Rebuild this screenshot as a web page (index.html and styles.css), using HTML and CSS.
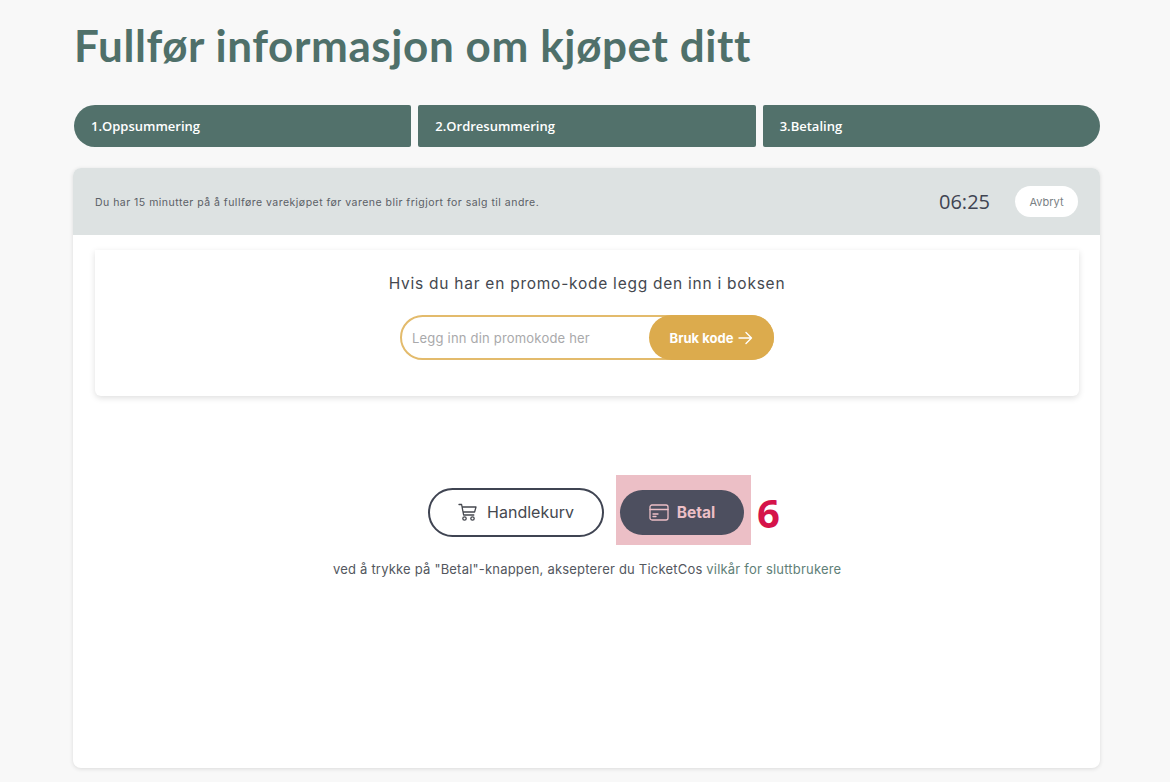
FILE: index.html
```html
<!DOCTYPE html>
<html lang="no">
<head>
  <meta charset="UTF-8" />
  <title>Fullfør informasjon om kjøpet ditt</title>
  <link rel="stylesheet" href="styles.css">
</head>
<body>
  <div class="page">
    <h1 class="title">Fullfør informasjon om kjøpet ditt</h1>

    <div class="steps">
      <div class="step">1.Oppsummering</div>
      <div class="step">2.Ordresummering</div>
      <div class="step">3.Betaling</div>
    </div>

    <div class="card">
      <div class="card-head">
        <p class="notice">Du har 15 minutter på å fullføre varekjøpet før varene blir frigjort for salg til andre.</p>
        <span class="timer">06:25</span>
        <button class="cancel">Avbryt</button>
      </div>

      <div class="promo">
        <p class="promo-label">Hvis du har en promo-kode legg den inn i boksen</p>
        <div class="promo-field">
          <span class="promo-hint">Legg inn din promokode her</span>
          <button class="promo-btn">Bruk kode
            <svg width="15" height="14" viewBox="0 0 15 14" fill="none" stroke="currentColor" stroke-width="1.4" stroke-linecap="round" stroke-linejoin="round"><path d="M1 7h12.5M8 1.5 13.500 7 8 12.500"/></svg>
          </button>
        </div>
      </div>

      <div class="actions">
        <button class="btn-cart">
          <svg width="20" height="19" viewBox="0 0 20 19" fill="none" stroke="currentColor" stroke-width="1.300" stroke-linecap="round" stroke-linejoin="round"><path d="M1 1.500h2.600l2 10.500h10.200M4 4h14l-1.400 5H5"/><circle cx="6.500" cy="15.500" r="1.700"/><circle cx="14.500" cy="15.500" r="1.700"/></svg>
          Handlekurv
        </button>
        <div class="mark">
          <button class="btn-pay">
            <svg width="20" height="17" viewBox="0 0 20 17" fill="none" stroke="currentColor" stroke-width="1.300" stroke-linecap="round" stroke-linejoin="round"><rect x="1" y="1" width="18" height="15" rx="2"/><path d="M1 5.500h18M4 10h5M4 12.500h3"/></svg>
            Betal
          </button>
        </div>
        <span class="mark-no">6</span>
      </div>

      <p class="terms">ved å trykke på "Betal"-knappen, aksepterer du TicketCos <a class="terms-link" href="#">vilkår for sluttbrukere</a></p>
    </div>
  </div>
</body>
</html>
```

FILE: styles.css
```css
* {
  margin: 0;
  padding: 0;
  box-sizing: border-box;
  font-family: "Inter", sans-serif;
}

body {
  background-color: #f8f8f8;
  height: 782px;
  overflow: hidden;
}

button {
  border: none;
  cursor: pointer;
}

.page {
  width: 1027px;
  margin-left: 73px;
}

.title {
  padding-top: 17px;
  padding-left: 1px;
  height: 105px;
  font-family: "Lato", sans-serif;
  font-size: 44px;
  line-height: 56px;
  font-weight: 700;
  letter-spacing: 0.6px;
  color: #4f706a;
}

.steps {
  display: flex;
  gap: 7px;
  height: 42px;
  margin-bottom: 21px;
  padding-left: 1px;
}

.step {
  flex: 1;
  display: flex;
  align-items: center;
  padding-left: 17px;
  background-color: #52716b;
  color: #fff;
  font-family: "Open Sans", sans-serif;
  font-size: 13px;
  font-weight: 600;
  border-radius: 2px;
}

.step:first-child {
  border-radius: 21px 2px 2px 21px;
}

.step:last-child {
  border-radius: 2px 21px 21px 2px;
}

.card {
  height: 600px;
  background-color: #fff;
  border-radius: 8px;
  box-shadow: 0 1px 4px rgba(0, 0, 0, 0.12);
}

.card-head {
  display: flex;
  align-items: center;
  height: 67px;
  padding: 0 22px;
  background-color: #dde2e2;
  border-radius: 8px 8px 0 0;
}

.notice {
  flex: 1;
  padding-top: 1px;
  font-size: 10.500px;
  letter-spacing: 0.48px;
  color: #5b6066;
}

.timer {
  margin-right: 25px;
  font-family: "Open Sans", sans-serif;
  font-size: 20px;
  color: #3f4452;
}

.cancel {
  width: 63px;
  height: 31px;
  border-radius: 16px;
  background-color: #fff;
  color: #7a8185;
  font-size: 11px;
}

.promo {
  height: 146px;
  margin: 15px 21px 0 22px;
  padding-top: 24px;
  background-color: #fff;
  border-radius: 0 0 6px 6px;
  box-shadow: 0 2px 6px rgba(0, 0, 0, 0.13);
  text-align: center;
}

.promo-label {
  font-size: 15.500px;
  line-height: 20px;
  letter-spacing: 0.75px;
  color: #44484f;
}

.promo-field {
  display: flex;
  align-items: center;
  justify-content: space-between;
  width: 374px;
  height: 45px;
  margin: 21px auto 0;
  padding-left: 10px;
  border: 2px solid #e3bb6c;
  border-radius: 23px;
}

.promo-hint {
  font-size: 13px;
  letter-spacing: 0.2px;
  color: #a9a9ab;
}

.promo-btn {
  display: flex;
  align-items: center;
  justify-content: center;
  gap: 5px;
  width: 125px;
  height: 45px;
  margin-right: -2px;
  border-radius: 23px;
  background-color: #dcab4d;
  color: #fff;
  font-size: 13px;
  font-weight: 700;
}

.actions {
  display: flex;
  align-items: center;
  height: 70px;
  margin-top: 79px;
  padding-left: 355px;
}

.btn-cart {
  display: flex;
  align-items: center;
  justify-content: center;
  gap: 9px;
  width: 176px;
  height: 49px;
  margin-top: 4px;
  margin-right: 12px;
  background-color: #fff;
  border: 2px solid #3f4452;
  border-radius: 25px;
  color: #45484f;
  font-size: 16px;
}

.mark {
  display: flex;
  align-items: center;
  width: 135px;
  height: 70px;
  padding-left: 4px;
  padding-top: 5px;
  background-color: #ecbfc6;
}

.btn-pay {
  display: flex;
  align-items: center;
  justify-content: center;
  gap: 8px;
  width: 124px;
  height: 45px;
  border-radius: 23px;
  background-color: #4d4f5f;
  color: #ecbfc6;
  font-size: 15.500px;
  font-weight: 700;
}

.mark-no {
  margin-left: 6px;
  margin-top: 5px;
  font-family: "Open Sans", sans-serif;
  font-size: 40px;
  font-weight: 700;
  color: #d5134a;
}

.terms {
  margin-top: 16px;
  padding-left: 260px;
  font-size: 13px;
  letter-spacing: 0.2px;
  color: #53575e;
}

.terms-link {
  color: #5f8078;
  text-decoration: none;
}
```
